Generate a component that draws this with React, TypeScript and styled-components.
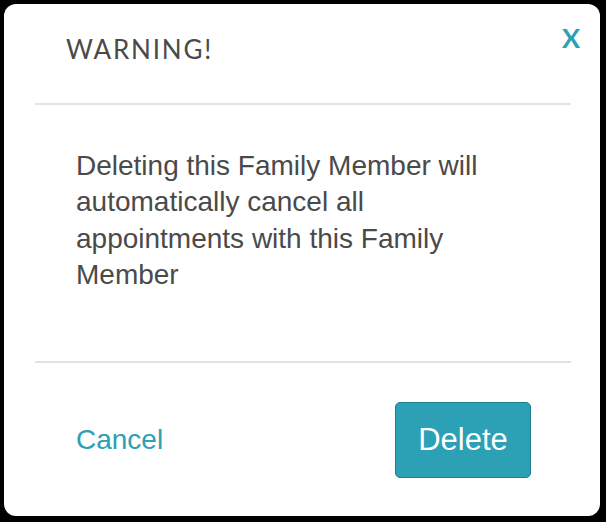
import styled, { createGlobalStyle } from 'styled-components';

const GlobalStyle = createGlobalStyle`
    html, body {
        margin: 0;
        padding: 0;
        background: #000000;
    }

    body {
        padding: 4px 6px 6px 4px;
        font-family: 'Liberation Sans', Arial, sans-serif;
    }
`;

export default function App() {
    return (
        <>
            <GlobalStyle />
            <Modal role="dialog" aria-labelledby="warning-title">
                <Header>
                    <Title id="warning-title">WARNING!</Title>
                    <CloseButton aria-label="Close">X</CloseButton>
                </Header>
                <Divider />
                <Body>
                    <Message>
                        Deleting this Family Member will automatically cancel
                        all appointments with this Family Member
                    </Message>
                </Body>
                <Divider />
                <Footer>
                    <CancelButton>Cancel</CancelButton>
                    <DeleteButton>Delete</DeleteButton>
                </Footer>
            </Modal>
        </>
    );
}

const Modal = styled.div`
    width: 596px;
    height: 512px;
    box-sizing: border-box;
    display: flex;
    flex-direction: column;
    border-radius: 12px;
    background-color: #ffffff;
`;

const Header = styled.div`
    height: 99px;
    box-sizing: border-box;
    display: flex;
    justify-content: space-between;
    align-items: flex-start;
    padding: 20px 20px 0 62px;
`;

const Title = styled.h2`
    margin: 10px 0 0;
    font-family: 'Lato', sans-serif;
    font-size: 26px;
    font-weight: 400;
    letter-spacing: 1.8px;
    line-height: 30px;
    color: #4a4a4a;
`;

const CloseButton = styled.button`
    padding: 0;
    border: none;
    background: none;
    font-family: 'Lato', sans-serif;
    font-size: 27px;
    font-weight: 700;
    line-height: 27px;
    color: #2ca0b5;
    cursor: pointer;
`;

const Divider = styled.hr`
    height: 2px;
    margin: 0 29px 0 31px;
    border: none;
    background-color: #e3e3e3;
`;

const Body = styled.div`
    height: 256px;
    box-sizing: border-box;
    padding: 43px 84px 0 72px;
`;

const Message = styled.p`
    margin: 0;
    font-size: 28px;
    line-height: 36.3px;
    color: #4a4a4a;
`;

const Footer = styled.div`
    flex: 1;
    display: flex;
    justify-content: space-between;
    align-items: center;
    padding: 0 69px 0 72px;
`;

const CancelButton = styled.button`
    padding: 0;
    border: none;
    background: none;
    font-family: 'Liberation Sans', Arial, sans-serif;
    font-size: 28px;
    color: #2ca0b5;
    cursor: pointer;
`;

const DeleteButton = styled.button`
    width: 136px;
    height: 76px;
    box-sizing: border-box;
    border: 1px solid #1f7f8f;
    border-radius: 5px;
    font-family: 'Liberation Sans', Arial, sans-serif;
    font-size: 31px;
    color: #ffffff;
    background-color: #2ca0b5;
    cursor: pointer;
`;
